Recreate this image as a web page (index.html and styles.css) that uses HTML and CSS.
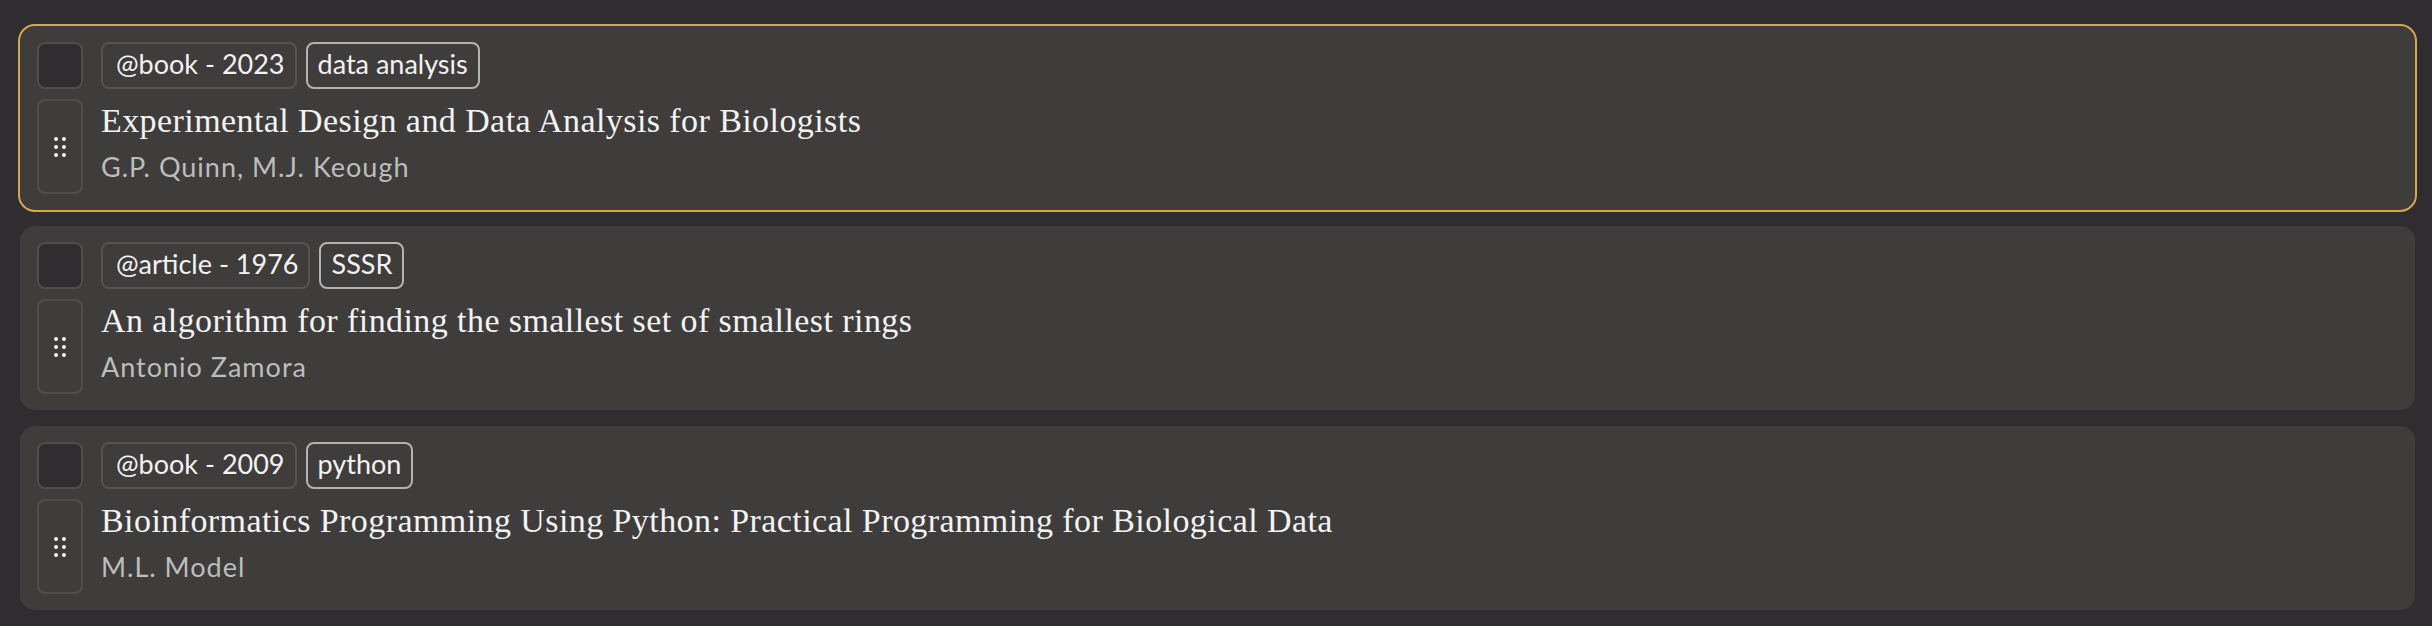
FILE: index.html
```html
<!DOCTYPE html>
<html lang="en">
<head>
<meta charset="utf-8">
<title>References</title>
<link rel="stylesheet" href="styles.css">
</head>
<body>
<main class="list">
  <article class="card card--active">
    <div class="check"></div>
    <div class="tags">
      <span class="tag tag--type">@book - 2023</span>
      <span class="tag tag--kw">data analysis</span>
    </div>
    <div class="handle">
      <svg width="12" height="20" viewBox="0 0 12 20"><circle cx="2" cy="2" r="2"/><circle cx="10" cy="2" r="2"/><circle cx="2" cy="10" r="2"/><circle cx="10" cy="10" r="2"/><circle cx="2" cy="18" r="2"/><circle cx="10" cy="18" r="2"/></svg>
    </div>
    <div class="text">
      <div class="title">Experimental Design and Data Analysis for Biologists</div>
      <div class="authors">G.P. Quinn, M.J. Keough</div>
    </div>
  </article>
  <article class="card">
    <div class="check"></div>
    <div class="tags">
      <span class="tag tag--type">@article - 1976</span>
      <span class="tag tag--kw">SSSR</span>
    </div>
    <div class="handle">
      <svg width="12" height="20" viewBox="0 0 12 20"><circle cx="2" cy="2" r="2"/><circle cx="10" cy="2" r="2"/><circle cx="2" cy="10" r="2"/><circle cx="10" cy="10" r="2"/><circle cx="2" cy="18" r="2"/><circle cx="10" cy="18" r="2"/></svg>
    </div>
    <div class="text">
      <div class="title">An algorithm for finding the smallest set of smallest rings</div>
      <div class="authors">Antonio Zamora</div>
    </div>
  </article>
  <article class="card">
    <div class="check"></div>
    <div class="tags">
      <span class="tag tag--type">@book - 2009</span>
      <span class="tag tag--kw">python</span>
    </div>
    <div class="handle">
      <svg width="12" height="20" viewBox="0 0 12 20"><circle cx="2" cy="2" r="2"/><circle cx="10" cy="2" r="2"/><circle cx="2" cy="10" r="2"/><circle cx="10" cy="10" r="2"/><circle cx="2" cy="18" r="2"/><circle cx="10" cy="18" r="2"/></svg>
    </div>
    <div class="text">
      <div class="title">Bioinformatics Programming Using Python: Practical Programming for Biological Data</div>
      <div class="authors">M.L. Model</div>
    </div>
  </article>
</main>
</body>
</html>
```
FILE: styles.css
```css
html, body {
  margin: 0;
  padding: 0;
  background: #2f2d30;
}
body {
  font-family: Lato, "Noto Sans", sans-serif;
  color: #f0f0f0;
}
.list {
  display: flex;
  flex-direction: column;
  gap: 16px;
  padding: 26px 17px 16px 20px;
}
.card {
  display: grid;
  grid-template-columns: 46px 1fr;
  grid-template-rows: 47px auto;
  column-gap: 18px;
  row-gap: 10px;
  padding: 16px 16px 16px 17px;
  background: #3e3d3b;
  border-radius: 15px;
}
.card--active {
  outline: 2px solid #d6a84e;
}
.check {
  box-sizing: border-box;
  width: 46px;
  height: 47px;
  background: #2f2d30;
  border: 2px solid #4f4e4d;
  border-radius: 8px;
}
.tags {
  display: flex;
  gap: 9px;
  align-items: stretch;
}
.tag {
  box-sizing: border-box;
  display: flex;
  align-items: center;
  height: 47px;
  padding: 0 10px 3px 10px;
  font-size: 27px;
  line-height: 40px;
  border-radius: 8px;
  color: #f2f2f2;
  white-space: nowrap;
}
.tag--type {
  padding-left: 13px;
  border: 2px solid #555453;
}
.tag--kw {
  border: 2px solid #b3b3b3;
}
.handle {
  box-sizing: border-box;
  width: 46px;
  min-height: 95px;
  display: flex;
  align-items: center;
  justify-content: center;
  border: 2px solid #4f4e4d;
  border-radius: 8px;
}
.handle svg {
  fill: #f4f4f4;
}
.text {
  display: flex;
  flex-direction: column;
}
.title {
  font-family: "Liberation Serif", "Times New Roman", serif;
  font-size: 34px;
  line-height: 44px;
  color: #f3f3f3;
  letter-spacing: 0.42px;
}
.authors {
  font-size: 27px;
  line-height: 47px;
  letter-spacing: 1px;
  color: #bdbdbc;
}
```
